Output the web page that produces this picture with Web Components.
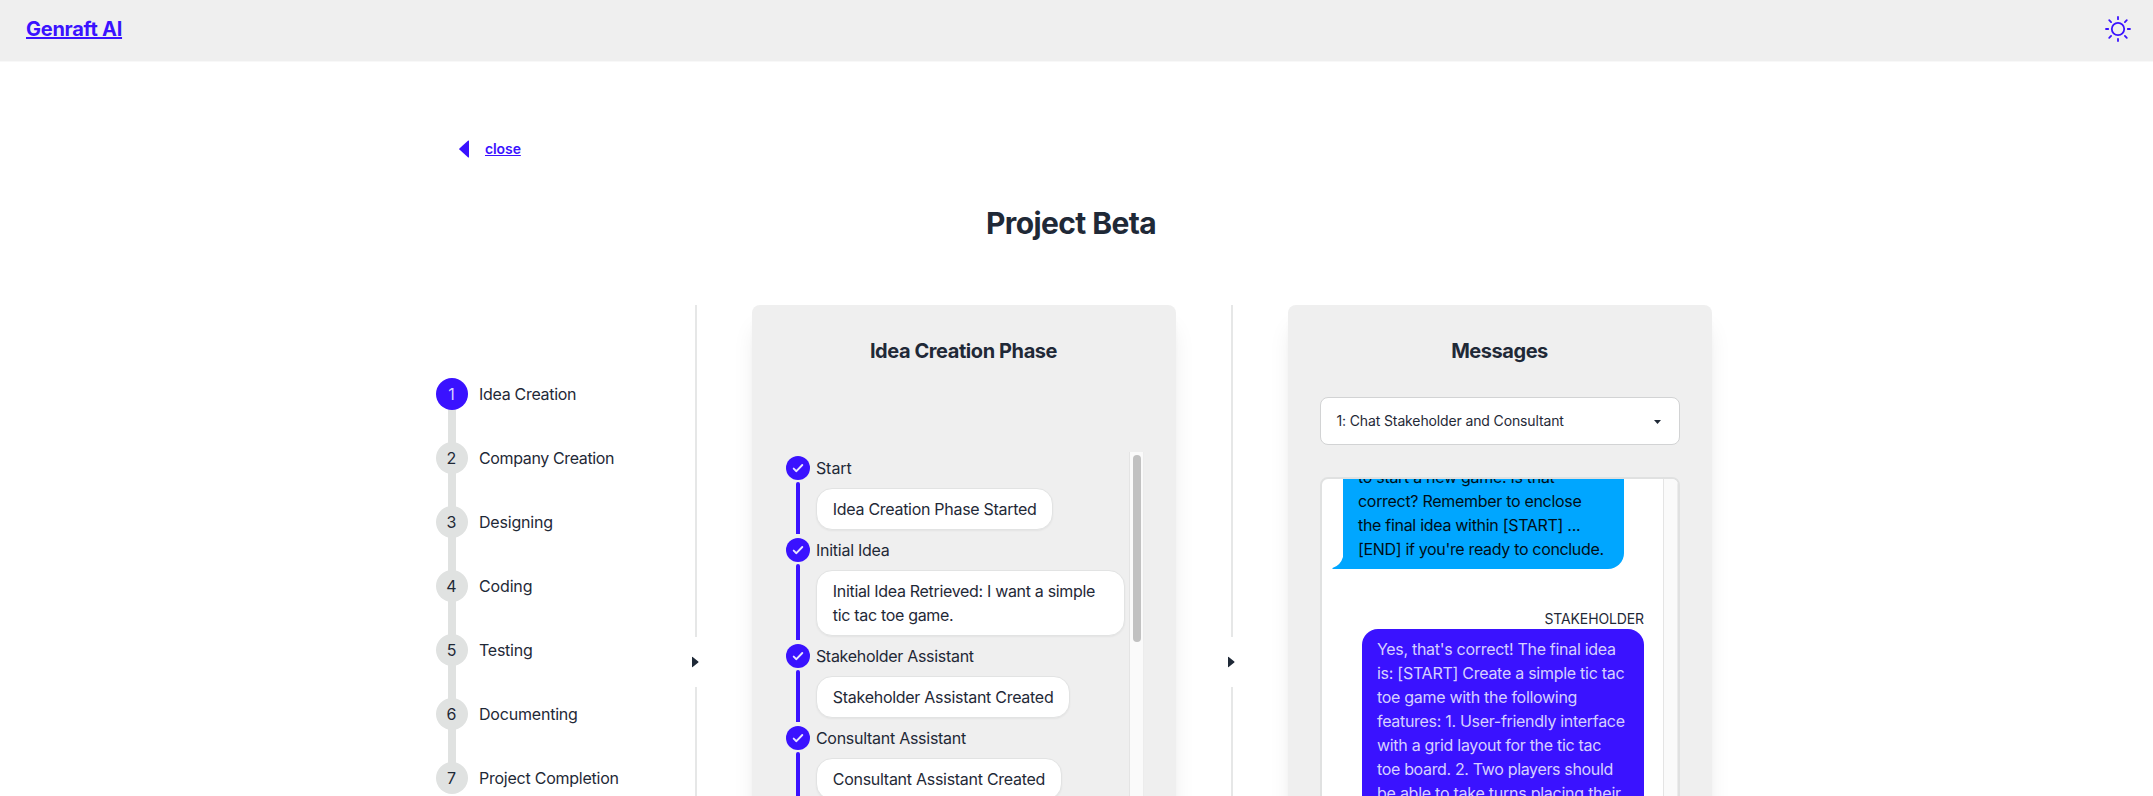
<!DOCTYPE html>
<html lang="en">
<head>
<meta charset="utf-8">
<title>Genraft AI</title>
<style>
html,body{margin:0;height:796px;overflow:hidden;background:#fff}
body{font-family:Inter,"Liberation Sans",sans-serif;font-size:16px;line-height:24px;color:#1f2937}
</style>
</head>
<body>
<project-page></project-page>
<script>
const define=(name,html,setup)=>{
  const t=document.createElement('template');t.innerHTML=html;
  customElements.define(name,class extends HTMLElement{
    constructor(){super();this.attachShadow({mode:'open'}).append(t.content.cloneNode(true));}
    connectedCallback(){if(setup)setup(this,this.shadowRoot);}
  });
};
/* Text run with its own tracking, in px */
define('track-text','<style>:host{display:inline}</style><slot></slot>',h=>{h.style.letterSpacing=h.getAttribute('ls')+'px';});

define('sun-icon',`<style>:host{display:block;width:26px;height:26px;padding-bottom:1px}svg{display:block}</style>
<svg width="26" height="26" viewBox="-13 -13 26 26" fill="none" stroke="#3a12ff" stroke-width="1.8" stroke-linecap="round"><circle r="6.2"/><path d="M0-12V-9.8M0 12V9.8M-12 0H-9.800M12 0H9.800M-8.800-8.800L-6.900-6.900M8.800-8.800L6.900-6.900M-8.800 8.800L-6.900 6.900M8.800 8.800L6.900 6.900"/></svg>`);

define('app-header',`<style>
:host{display:flex;justify-content:space-between;align-items:center;box-sizing:border-box;height:61px;padding:0 22px 2px 26px;background:#efefef;box-shadow:0 1px 0 #f8f8f8}
a{padding-bottom:2px;font-size:20px;line-height:28px;font-weight:700;color:#3a12ff;text-decoration:underline;text-decoration-thickness:2px;text-underline-offset:1px;text-decoration-skip-ink:none}
</style><a><track-text ls="-0.26">Genraft AI</track-text></a><sun-icon></sun-icon>`);

define('close-link',`<style>:host{display:flex;align-items:center;gap:16px;color:#3a12ff;font-size:14px;line-height:20px;font-weight:600}
a{text-decoration:underline;text-decoration-skip-ink:none;text-underline-offset:1px}svg{display:block}</style>
<svg width="10" height="18" viewBox="0 0 10 18"><path fill="#3a12ff" d="M9.2.5Q10 .3 10 1V17Q10 17.700 9.200 17.500L.4 9.400Q0 9 .4 8.600Z"/></svg><a><slot></slot></a>`);

define('step-item',`<style>
:host{display:grid;grid-template-columns:32px auto;column-gap:11px;height:64px}
.rail{display:flex;flex-direction:column;align-items:center}
i{font-style:normal;width:32px;height:32px;border-radius:50%;background:#e0e2e1;line-height:32px;text-align:center;text-indent:-1px}
b{width:8px;height:34px;margin:-1px 0;background:#e0e2e1}
:host([active]) i{background:#3a12ff;color:#d8d4ff}
:host([active]) b{margin-top:0;height:33px}
:host([last]) b{display:none}
.l{line-height:32px;white-space:nowrap}
</style><div class="rail"><i></i><b></b></div><div class="l"><slot></slot></div>`,(h,r)=>{r.querySelector('i').textContent=h.getAttribute('n');});

define('col-divider',`<style>
:host{display:flex;flex-direction:column;align-items:center;gap:19px}
b{width:2px;flex:1;background:#e6e7e7}svg{display:block;margin-left:-2px}
</style><b></b><svg width="7" height="12" viewBox="0 0 7 12"><path fill="#1f2937" d="M0 1.200Q0 .4.7 1L6.300 5.500Q6.800 6 6.300 6.500L.7 11Q0 11.600 0 10.800Z"/></svg><b></b>`);

define('panel-card',`<style>
:host{display:flex;flex-direction:column;box-sizing:border-box;height:714px;padding:32px;background:#efefef;border-radius:8px;box-shadow:0 20px 25px -5px #0000001a,0 8px 10px -6px #0000001a}
h2{margin:0 1px 0 0;font-size:20px;line-height:28px;font-weight:700;text-align:center}
</style><h2><slot name="title"></slot></h2><slot></slot>`);

define('log-entry',`<style>
:host{display:grid;grid-template-columns:24px minmax(0,1fr);column-gap:6px}
.rail{display:flex;flex-direction:column}
.dot{width:24px;height:24px;flex:none;border-radius:50%;background:#3a12ff}
.bar{width:4px;flex:1;margin:2px 0 4px 9.700px;background:#3a12ff;border-radius:2px 2px 0 0}
.msg{width:fit-content;box-sizing:border-box;margin:8px 0;padding:8px 15.500px;border:1px solid #e2e3e3;border-radius:16px;background:#fff;box-shadow:0 1px 2px #0000000d}
.t{height:24px;margin-left:-.4px;white-space:nowrap}
</style><div class="rail"><svg class="dot" viewBox="0 0 24 24"><path d="M7.700 12.600L10.400 15.200L16.300 9" fill="none" stroke="#e8e4ff" stroke-width="1.900" stroke-linecap="round" stroke-linejoin="round"/></svg><div class="bar"></div></div>
<div><div class="t"><slot name="label"></slot></div><div class="msg"><slot></slot></div></div>`);

define('scroll-track',`<style>:host{display:block;box-sizing:border-box;width:15px;background:#fafafa;border-left:1px solid #e4e4e4;border-right:1px solid #ececec;padding:3px 2px 0 3px}
i{display:block;width:8px;height:187px;border-radius:4px;background:#c1c1c1}:host([bare]) i{display:none}</style><i></i>`);

define('phase-log',`<style>:host{display:flex;margin-top:87px;flex:1;min-height:0}
.list{width:345px;padding:4px 4.500px 0 2.300px;box-sizing:border-box;overflow:hidden}</style><div class="list"><slot></slot></div><scroll-track></scroll-track>`);

define('chat-select',`<style>:host{display:flex;justify-content:space-between;align-items:center;box-sizing:border-box;height:48px;margin-top:32px;padding:0 18px 0 15.500px;border:1px solid #d2d3d4;border-radius:8px;background:#fff;font-size:14px;line-height:20px}
svg{display:block;margin-top:2px}</style><span><slot></slot></span><svg width="7" height="4" viewBox="0 0 7 4"><path d="M0 0H7L3.500 4Z" fill="#1f2937"/></svg>`);

define('chat-box',`<style>:host{display:flex;box-sizing:border-box;flex:1;min-height:0;margin-top:32px;border:2px solid #e0e1e1;border-radius:8px;background:#fff;overflow:hidden}
.v{flex:1;overflow:hidden;display:flex;flex-direction:column;justify-content:flex-start}</style><div class="v"><slot></slot></div><scroll-track bare></scroll-track>`);

define('chat-bubble',`<style>:host{display:flex;flex-direction:column;align-items:flex-start;padding-left:21px}
.b{position:relative;box-sizing:border-box;width:281px;padding:8px 0 8px 15px;white-space:nowrap;background:#00a6ff;color:#000e16;border-radius:16px 16px 16px 0}
svg{position:absolute;left:-11px;bottom:0}
.who{font-size:14px;line-height:20px}
:host([mine]){align-items:flex-end;padding:0 19px 0 0}
:host([mine]) .b{width:282px;background:#3a12ff;color:#d6d0ff;border-radius:16px 16px 0 16px}
:host([mine]) svg{display:none}
</style><div class="who"><slot name="who"></slot></div><div class="b"><slot></slot><svg width="12" height="12" viewBox="0 0 12 12"><path fill="#00a6ff" d="M12 0H11Q8.500 8.500.5 11Q0 12 1 12H12Z"/></svg></div>`);

define('project-page',`<style>
:host{display:block;height:796px;overflow:hidden}
main{width:1280px;margin-left:432px}
close-link{margin:78px 0 0 27px;height:20px}
h1{margin:46px 0 0;padding-right:2px;font-size:30px;line-height:36px;font-weight:700;text-align:center}
.cols{display:grid;grid-template-columns:208px 112px 424px 112px 424px;margin-top:64px;height:714px}
.steps{padding:73px 0 0 4px}
.earlier{margin:-22px 0 40px}
</style>
<app-header></app-header>
<main>
<close-link><track-text ls="-0.1">close</track-text></close-link>
<h1><track-text ls="-0.6">Project Beta</track-text></h1>
<div class="cols">
<div class="steps">
<step-item n="1" active><track-text ls="-0.3">Idea Creation</track-text></step-item>
<step-item n="2"><track-text ls="-0.37">Company Creation</track-text></step-item>
<step-item n="3"><track-text ls="-0.2">Designing</track-text></step-item>
<step-item n="4"><track-text ls="-0.15">Coding</track-text></step-item>
<step-item n="5"><track-text ls="-0.25">Testing</track-text></step-item>
<step-item n="6"><track-text ls="-0.2">Documenting</track-text></step-item>
<step-item n="7" last><track-text ls="-0.24">Project Completion</track-text></step-item>
</div>
<col-divider></col-divider>
<panel-card><track-text slot="title" ls="-0.42">Idea Creation Phase</track-text>
<phase-log>
<log-entry><track-text slot="label" ls="-0.05">Start</track-text><track-text ls="-0.29">Idea Creation Phase Started</track-text></log-entry>
<log-entry><track-text slot="label" ls="-0.25">Initial Idea</track-text><track-text ls="-0.32">Initial Idea Retrieved: I want a simple tic tac toe game.</track-text></log-entry>
<log-entry><track-text slot="label" ls="-0.3">Stakeholder Assistant</track-text><track-text ls="-0.28">Stakeholder Assistant Created</track-text></log-entry>
<log-entry><track-text slot="label" ls="-0.27">Consultant Assistant</track-text><track-text ls="-0.28">Consultant Assistant Created</track-text></log-entry>
</phase-log></panel-card>
<col-divider></col-divider>
<panel-card><track-text slot="title" ls="-0.45">Messages</track-text>
<chat-select><track-text ls="-0.13">1: Chat Stakeholder and Consultant</track-text></chat-select>
<chat-box>
<chat-bubble class="earlier"><track-text ls="-0.3">to start a new game. Is that</track-text><br><track-text ls="-0.3">correct? Remember to enclose</track-text><br><track-text ls="-0.3">the final idea within [START] ...</track-text><br><track-text ls="-0.33">[END] if you're ready to conclude.</track-text></chat-bubble>
<chat-bubble mine><track-text slot="who" ls="-0.12">STAKEHOLDER</track-text><track-text ls="-0.3">Yes, that's correct! The final idea</track-text><br><track-text ls="-0.27">is: [START] Create a simple tic tac</track-text><br><track-text ls="-0.3">toe game with the following</track-text><br><track-text ls="-0.3">features: 1. User-friendly interface</track-text><br><track-text ls="-0.3">with a grid layout for the tic tac</track-text><br><track-text ls="-0.34">toe board. 2. Two players should</track-text><br><track-text ls="-0.25">be able to take turns placing their</track-text></chat-bubble>
</chat-box></panel-card>
</div>
</main>`);
</script>
</body>
</html>
